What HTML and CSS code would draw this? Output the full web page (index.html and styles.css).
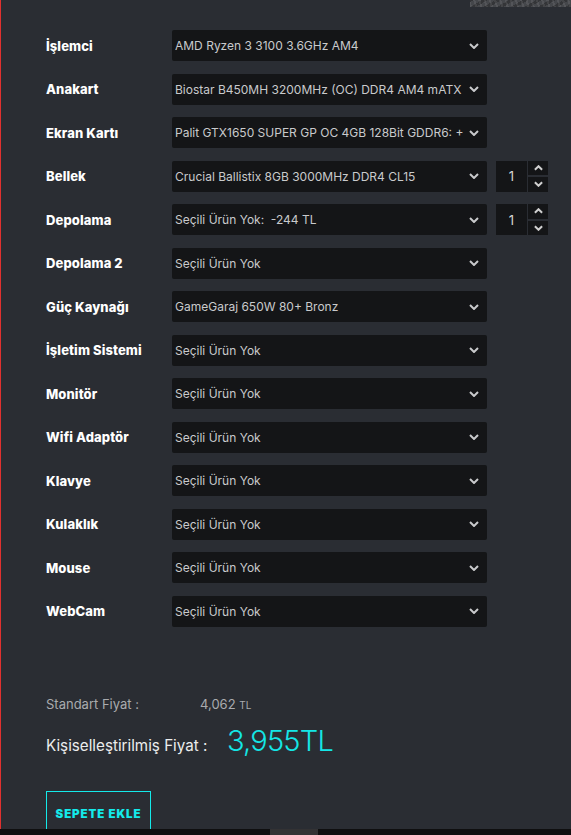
FILE: index.html
```html
<!DOCTYPE html>
<html lang="tr">
<head>
<meta charset="utf-8">
<title>Sistem Topla</title>
<link rel="stylesheet" href="styles.css">
</head>
<body>
<div class="texture"></div>
<main class="builder">
  <div class="rows">
    <div class="row"><span class="label">İşlemci</span><div class="select"><span class="val">AMD Ryzen 3 3100 3.6GHz AM4</span><svg class="chev" viewBox="0 0 10 6"><path d="M1 1l4 4 4-4"/></svg></div></div>
    <div class="row"><span class="label">Anakart</span><div class="select"><span class="val">Biostar B450MH 3200MHz (OC) DDR4 AM4 mATX</span><svg class="chev" viewBox="0 0 10 6"><path d="M1 1l4 4 4-4"/></svg></div></div>
    <div class="row"><span class="label">Ekran Kartı</span><div class="select"><span class="val">Palit GTX1650 SUPER GP OC 4GB 128Bit GDDR6: +</span><svg class="chev" viewBox="0 0 10 6"><path d="M1 1l4 4 4-4"/></svg></div></div>
    <div class="row"><span class="label">Bellek</span><div class="select"><span class="val">Crucial Ballistix 8GB 3000MHz DDR4 CL15</span><svg class="chev" viewBox="0 0 10 6"><path d="M1 1l4 4 4-4"/></svg></div>
      <div class="qty">1</div>
      <div class="spin"><span class="btn"><svg viewBox="0 0 10 6"><path d="M1 5l4-4 4 4"/></svg></span><span class="btn"><svg viewBox="0 0 10 6"><path d="M1 1l4 4 4-4"/></svg></span></div>
    </div>
    <div class="row"><span class="label">Depolama</span><div class="select"><span class="val">Seçili Ürün Yok:&nbsp; -244 TL</span><svg class="chev" viewBox="0 0 10 6"><path d="M1 1l4 4 4-4"/></svg></div>
      <div class="qty">1</div>
      <div class="spin"><span class="btn"><svg viewBox="0 0 10 6"><path d="M1 5l4-4 4 4"/></svg></span><span class="btn"><svg viewBox="0 0 10 6"><path d="M1 1l4 4 4-4"/></svg></span></div>
    </div>
    <div class="row"><span class="label">Depolama 2</span><div class="select"><span class="val">Seçili Ürün Yok</span><svg class="chev" viewBox="0 0 10 6"><path d="M1 1l4 4 4-4"/></svg></div></div>
    <div class="row"><span class="label">Güç Kaynağı</span><div class="select"><span class="val">GameGaraj 650W 80+ Bronz</span><svg class="chev" viewBox="0 0 10 6"><path d="M1 1l4 4 4-4"/></svg></div></div>
    <div class="row"><span class="label">İşletim Sistemi</span><div class="select"><span class="val">Seçili Ürün Yok</span><svg class="chev" viewBox="0 0 10 6"><path d="M1 1l4 4 4-4"/></svg></div></div>
    <div class="row"><span class="label">Monitör</span><div class="select"><span class="val">Seçili Ürün Yok</span><svg class="chev" viewBox="0 0 10 6"><path d="M1 1l4 4 4-4"/></svg></div></div>
    <div class="row"><span class="label">Wifi Adaptör</span><div class="select"><span class="val">Seçili Ürün Yok</span><svg class="chev" viewBox="0 0 10 6"><path d="M1 1l4 4 4-4"/></svg></div></div>
    <div class="row"><span class="label">Klavye</span><div class="select"><span class="val">Seçili Ürün Yok</span><svg class="chev" viewBox="0 0 10 6"><path d="M1 1l4 4 4-4"/></svg></div></div>
    <div class="row"><span class="label">Kulaklık</span><div class="select"><span class="val">Seçili Ürün Yok</span><svg class="chev" viewBox="0 0 10 6"><path d="M1 1l4 4 4-4"/></svg></div></div>
    <div class="row"><span class="label">Mouse</span><div class="select"><span class="val">Seçili Ürün Yok</span><svg class="chev" viewBox="0 0 10 6"><path d="M1 1l4 4 4-4"/></svg></div></div>
    <div class="row"><span class="label">WebCam</span><div class="select"><span class="val">Seçili Ürün Yok</span><svg class="chev" viewBox="0 0 10 6"><path d="M1 1l4 4 4-4"/></svg></div></div>
  </div>

  <div class="prices">
    <div class="std"><span class="std-label">Standart Fiyat :</span><span class="std-val">4,062 <small>TL</small></span></div>
    <div class="custom"><span class="custom-label">Kişiselleştirilmiş Fiyat :</span><span class="custom-val">3,955<span class="cur">TL</span></span></div>
  </div>

  <button class="cart">SEPETE EKLE</button>
</main>
<div class="hscroll"><div class="thumb"></div></div>
</body>
</html>
```

FILE: styles.css
```css
html, body {
  margin: 0;
  padding: 0;
}
body {
  width: 571px;
  height: 835px;
  overflow: hidden;
  background: #2a2d33;
  border-left: 1px solid #e0312f;
  box-sizing: border-box;
  font-family: "Inter", "Noto Sans", sans-serif;
  position: relative;
}
.texture {
  position: absolute;
  top: 0;
  right: 0;
  width: 101px;
  height: 7px;
  background:
    repeating-linear-gradient(73deg, rgba(255,255,255,0.08) 0 2px, transparent 2px 5px),
    repeating-linear-gradient(-31deg, rgba(0,0,0,0.25) 0 3px, transparent 3px 7px),
    #45474b;
}
.builder {
  padding: 30px 0 0 45px;
}
.rows {
  display: flex;
  flex-direction: column;
  gap: 12.5px;
}
.row {
  display: flex;
  align-items: center;
  height: 31px;
}
.label {
  width: 126px;
  flex: none;
  color: #ffffff;
  font-weight: 800;
  font-size: 13px;
  letter-spacing: 0.1px;
}
.select {
  width: 315px;
  height: 31px;
  flex: none;
  background: #141517;
  border-radius: 2px;
  display: flex;
  align-items: center;
  padding: 0 4px 0 3px;
  box-sizing: border-box;
  color: #c9cacc;
  font-size: 12px;
}
.val {
  flex: 1;
  min-width: 0;
  white-space: nowrap;
  overflow: hidden;
}
.chev {
  width: 10px;
  height: 6px;
  margin: 0 4px 0 1px;
  flex: none;
  fill: none;
  stroke: #c9cacc;
  stroke-width: 2;
}
.qty {
  margin-left: 9px;
  width: 31px;
  height: 31px;
  background: #141517;
  color: #d4d4d4;
  font-size: 13px;
  display: flex;
  align-items: center;
  justify-content: center;
}
.spin {
  margin-left: 1px;
  width: 20px;
  height: 31px;
  display: flex;
  flex-direction: column;
  justify-content: space-between;
}
.btn {
  height: 14.5px;
  background: #141517;
  display: flex;
  align-items: center;
  justify-content: center;
}
.btn svg {
  width: 9px;
  height: 6px;
  fill: none;
  stroke: #d0d0d0;
  stroke-width: 2.2;
}
.prices {
  margin-top: 69px;
}
.std {
  display: flex;
  align-items: baseline;
  color: #a9abae;
  font-size: 13px;
}
.std-label {
  width: 154px;
}
.std-val small {
  font-size: 10px;
}
.custom {
  margin-top: 11px;
  display: flex;
  align-items: baseline;
}
.custom-label {
  color: #eceded;
  font-size: 15.2px;
  width: 181px;
}
.custom-val {
  color: #14e6e6;
  font-size: 29px;
  font-weight: 300;
  letter-spacing: -0.8px;
}
.cart {
  margin-top: 33px;
  width: 105px;
  height: 50px;
  padding: 0 0 4px;
  background: transparent;
  border: 1px solid #14eaea;
  color: #14eaea;
  font-family: "Inter", sans-serif;
  font-weight: 900;
  font-size: 11.5px;
  letter-spacing: 0.9px;
}
.hscroll {
  position: fixed;
  left: 0;
  bottom: 0;
  width: 571px;
  height: 6px;
  background: #0f0f10;
}
.thumb {
  margin-left: 270px;
  width: 48px;
  height: 6px;
  background: #333234;
}
```
